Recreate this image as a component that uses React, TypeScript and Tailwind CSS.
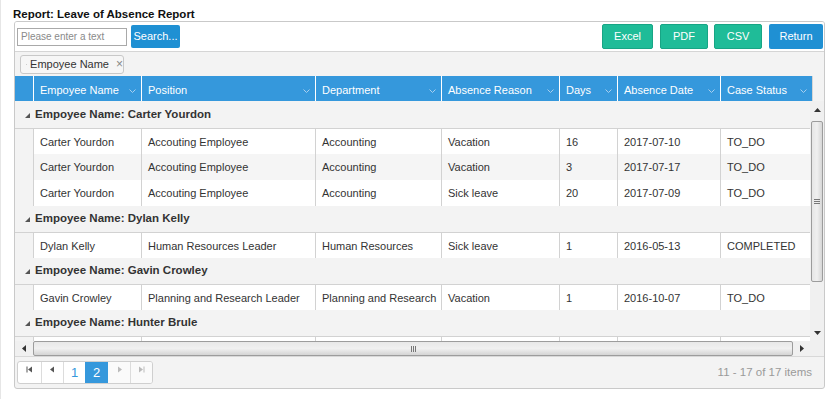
import type { ReactNode } from "react";

type Row = {
  name: string;
  position: string;
  department: string;
  reason: string;
  days: string;
  date: string;
  status: string;
};

const groups: { title: string; rows: Row[] }[] = [
  {
    title: "Carter Yourdon",
    rows: [
      { name: "Carter Yourdon", position: "Accouting Employee", department: "Accounting", reason: "Vacation", days: "16", date: "2017-07-10", status: "TO_DO" },
      { name: "Carter Yourdon", position: "Accouting Employee", department: "Accounting", reason: "Vacation", days: "3", date: "2017-07-17", status: "TO_DO" },
      { name: "Carter Yourdon", position: "Accouting Employee", department: "Accounting", reason: "Sick leave", days: "20", date: "2017-07-09", status: "TO_DO" },
    ],
  },
  {
    title: "Dylan Kelly",
    rows: [
      { name: "Dylan Kelly", position: "Human Resources Leader", department: "Human Resources", reason: "Sick leave", days: "1", date: "2016-05-13", status: "COMPLETED" },
    ],
  },
  {
    title: "Gavin Crowley",
    rows: [
      { name: "Gavin Crowley", position: "Planning and Research Leader", department: "Planning and Research", reason: "Vacation", days: "1", date: "2016-10-07", status: "TO_DO" },
    ],
  },
  {
    title: "Hunter Brule",
    rows: [
      { name: "", position: "", department: "", reason: "", days: "", date: "", status: "" },
    ],
  },
];

const columns = [
  "Empoyee Name",
  "Position",
  "Department",
  "Absence Reason",
  "Days",
  "Absence Date",
  "Case Status",
];

const gridCols = "grid grid-cols-[18px_108px_174px_126px_118px_58px_103px_92px]";

function Chevron() {
  return (
    <svg width="7" height="4" viewBox="0 0 7 4" className="shrink-0">
      <polyline points="0.5,0.5 3.5,3.5 6.5,0.5" fill="none" stroke="#a9cfee" strokeWidth="1" />
    </svg>
  );
}

function Collapse() {
  return (
    <svg width="5" height="5" viewBox="0 0 5 5">
      <polygon points="0,5 5,5 5,0" fill="#555" />
    </svg>
  );
}

function GreenButton({ children, w }: { children: ReactNode; w: string }) {
  return (
    <button
      type="button"
      className={`${w} h-[25px] rounded-[2px] border border-[#18a585] bg-[#1fbc98] text-[11px] text-white`}
    >
      {children}
    </button>
  );
}

function PagerIcon({ kind }: { kind: "first" | "prev" | "next" | "last" }) {
  return (
    <svg width="7" height="7" viewBox="0 0 7 7">
      {kind === "first" && (
        <>
          <rect x="0.5" y="0.5" width="1" height="6" fill="#555" />
          <polygon points="6,0.5 6,6.5 2,3.5" fill="#555" />
        </>
      )}
      {kind === "prev" && <polygon points="5,0.5 5,6.5 1,3.5" fill="#555" />}
      {kind === "next" && <polygon points="2,0.5 2,6.5 6,3.5" fill="#bbb" />}
      {kind === "last" && (
        <>
          <polygon points="1,0.5 1,6.5 5,3.5" fill="#bbb" />
          <rect x="5.5" y="0.5" width="1" height="6" fill="#bbb" />
        </>
      )}
    </svg>
  );
}

export default function App() {
  return (
    <div className="h-[399px] w-[837px] border-l border-[#e6e6e6] bg-white font-['Liberation_Sans',Arial,sans-serif] text-[11px] text-[#333]">
      <div className="pl-[12px] pt-[7px] text-[11.5px] font-bold leading-[14px] text-[#111]">
        Report: Leave of Absence Report
      </div>

      <div className="ml-[13px] w-[811px] overflow-hidden rounded-[3px] border border-[#c9c9c9] bg-[#f3f3f3]">
        {/* toolbar */}
        <div className="flex h-[30px] items-center border-b border-[#d5d5d5] bg-white pl-[2px] pr-[1px]">
          <div className="flex h-[18px] w-[110px] items-center border border-[#a9a9a9] px-[3px] text-[10px] text-[#8a8a8a]">
            Please enter a text
          </div>
          <button
            type="button"
            className="ml-[4px] h-[23px] w-[49px] rounded-[2px] bg-[#1f90d3] text-[11px] text-white"
          >
            Search...
          </button>
          <div className="ml-auto flex items-center">
            <GreenButton w="w-[51px]">Excel</GreenButton>
            <div className="w-[7px]" />
            <GreenButton w="w-[48px]">PDF</GreenButton>
            <div className="w-[6px]" />
            <GreenButton w="w-[48px]">CSV</GreenButton>
            <div className="w-[7px]" />
            <button
              type="button"
              className="h-[25px] w-[54px] rounded-[2px] bg-[#1f90d3] text-[11px] text-white"
            >
              Return
            </button>
          </div>
        </div>

        {/* group panel */}
        <div className="flex h-[24px] items-center pl-[5px]">
          <div className="flex h-[19px] w-[104px] items-center gap-[3px] whitespace-nowrap rounded-[3px] border border-[#c8c8c8] bg-[#f6f6f6] pl-[5px] text-[11px] text-[#333]">
            <svg width="5" height="3" viewBox="0 0 5 3">
              <polygon points="0,0 5,0 2.5,3" fill="#555" />
            </svg>
            <span>Empoyee Name</span>
            <span className="ml-[4px] text-[12px] text-[#888]">×</span>
          </div>
        </div>

        {/* header */}
        <div className="flex h-[25px]">
          <div className={`${gridCols} w-[797px] bg-[#3598dc] text-[11px] text-white`}>
            <div />
            {columns.map((c) => (
              <div
                key={c}
                className="flex items-center justify-between border-l border-white pl-[6px] pr-[5px] pt-[4px]"
              >
                <span>{c}</span>
                <Chevron />
              </div>
            ))}
          </div>
          <div className="flex-1 border-l border-[#d5d5d5]" />
        </div>

        {/* body + scrollbars */}
        <div className="flex h-[240px]">
          <div className="relative w-[795px] overflow-hidden bg-[#f3f3f3]">
            <div className="w-[797px] pt-[1px]">
              {groups.map((g) => (
                <div key={g.title}>
                  <div className="flex h-[26px] items-center">
                    <div className="flex w-[20px] justify-end pr-[5px] pt-[1px]">
                      <Collapse />
                    </div>
                    <span className="text-[11.5px] font-bold">Empoyee Name: {g.title}</span>
                  </div>
                  {g.rows.map((r, i) => (
                    <div
                      key={i}
                      className={`${gridCols} h-[26px] ${i === 0 ? "border-t border-[#d2d2d2]" : ""}`}
                    >
                      <div className="bg-[#f3f3f3]" />
                      {[r.name, r.position, r.department, r.reason, r.days, r.date, r.status].map(
                        (v, j) => (
                          <div
                            key={j}
                            className={`flex items-center whitespace-nowrap border-l border-[#d2d2d2] pl-[6px] pt-[1px] ${
                              i % 2 === 1 ? "bg-[#f5f5f5]" : "bg-white"
                            }`}
                          >
                            {v}
                          </div>
                        )
                      )}
                    </div>
                  ))}
                </div>
              ))}
            </div>
          </div>

          {/* vertical scrollbar */}
          <div className="flex w-[14px] flex-col bg-[#f0f0f0]">
            <div className="flex h-[17px] items-center justify-center">
              <svg width="7" height="4" viewBox="0 0 7 4">
                <polygon points="0,4 7,4 3.5,0" fill="#333" />
              </svg>
            </div>
            <div className="flex-1 px-[1px] pt-[3px]">
              <div className="flex h-[161px] items-center justify-center rounded-[2px] border border-[#9c9c9c] bg-gradient-to-r from-[#e6e6e6] via-[#f0f0f0] to-[#d6d6d6]">
                <div className="flex flex-col gap-[1px]">
                  <div className="h-px w-[6px] bg-[#777]" />
                  <div className="h-px w-[6px] bg-[#777]" />
                  <div className="h-px w-[6px] bg-[#777]" />
                </div>
              </div>
            </div>
            <div className="flex h-[17px] items-center justify-center">
              <svg width="7" height="4" viewBox="0 0 7 4">
                <polygon points="0,0 7,0 3.5,4" fill="#333" />
              </svg>
            </div>
          </div>
        </div>

        {/* horizontal scrollbar */}
        <div className="flex h-[15px]">
          <div className="flex w-[795px] bg-[#f0f0f0]">
            <div className="flex w-[18px] items-center justify-center">
              <svg width="4" height="7" viewBox="0 0 4 7">
                <polygon points="4,0 4,7 0,3.5" fill="#333" />
              </svg>
            </div>
            <div className="flex w-[760px] items-center justify-center rounded-[2px] border border-[#9c9c9c] bg-gradient-to-b from-[#e8e8e8] via-[#f0f0f0] to-[#d4d4d4]">
              <div className="flex gap-[1px]">
                <div className="h-[6px] w-px bg-[#777]" />
                <div className="h-[6px] w-px bg-[#777]" />
                <div className="h-[6px] w-px bg-[#777]" />
              </div>
            </div>
            <div className="flex flex-1 items-center justify-center">
              <svg width="4" height="7" viewBox="0 0 4 7">
                <polygon points="0,0 0,7 4,3.5" fill="#333" />
              </svg>
            </div>
          </div>
          <div className="flex-1 bg-[#f0f0f0]" />
        </div>

        {/* pager */}
        <div className="flex h-[32px] items-center border-t border-[#d8d8d8] pl-[2px] pr-[12px]">
          <div className="flex h-[23px] overflow-hidden rounded-[3px] border border-[#cfcfcf] bg-white">
            <div className="flex w-[23px] items-start justify-center pt-[4px]">
              <PagerIcon kind="first" />
            </div>
            <div className="flex w-[22px] items-start justify-center border-l border-[#dcdcdc] pt-[4px]">
              <PagerIcon kind="prev" />
            </div>
            <div className="flex w-[22px] items-center justify-center border-l border-[#dcdcdc] text-[13px] text-[#3598dc]">
              1
            </div>
            <div className="flex w-[23px] items-center justify-center bg-[#3598dc] text-[13px] text-white">
              2
            </div>
            <div className="flex w-[22px] items-start justify-center bg-[#fafafa] pt-[4px]">
              <PagerIcon kind="next" />
            </div>
            <div className="flex w-[22px] items-start justify-center border-l border-[#dcdcdc] bg-[#fafafa] pt-[4px]">
              <PagerIcon kind="last" />
            </div>
          </div>
          <span className="ml-auto text-[11.5px] text-[#9a9a9a]">11 - 17 of 17 items</span>
        </div>
      </div>
    </div>
  );
}
